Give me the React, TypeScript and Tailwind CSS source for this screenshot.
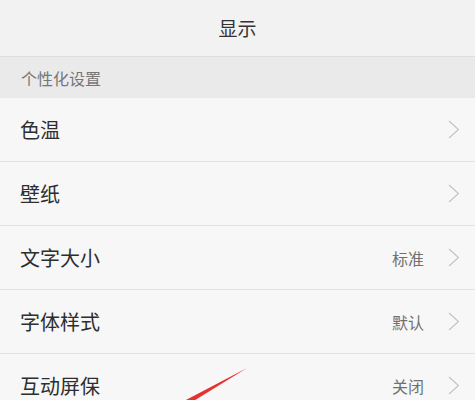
import React from "react";

type Row = { label: string; value?: string };

const ROWS: Row[] = [
  { label: "色温" },
  { label: "壁纸" },
  { label: "文字大小", value: "标准" },
  { label: "字体样式", value: "默认" },
  { label: "互动屏保", value: "关闭" },
];

function Chevron() {
  return (
    <svg width="12" height="19" viewBox="0 0 12 19" fill="none" className="shrink-0">
      <path d="M1 1 L10.5 9.5 L1 18" stroke="#c4c4c4" strokeWidth="1.2" />
    </svg>
  );
}

export default function App() {
  return (
    <div
      className="relative h-[400px] w-[475px] overflow-hidden bg-[#f7f7f7]"
      style={{ fontFamily: '"Noto Sans CJK SC", "Noto Sans", sans-serif' }}
    >
      <header className="flex h-[57px] items-center justify-center border-b border-[#dedede] bg-[#f2f2f2] pt-[1px]">
        <h1 className="text-[19px] text-[#333]">显示</h1>
      </header>

      <div className="flex h-[41px] items-center bg-[#eaeaea] px-[21px]">
        <span className="text-[16px] text-[#767676]">个性化设置</span>
      </div>

      {ROWS.map((row) => (
        <div
          key={row.label}
          className="flex h-[64px] items-center border-b border-[#e3e3e3] pl-[20px] pr-[15px]"
        >
          <span className="flex-1 text-[20px] text-[#2e2e2e]">{row.label}</span>
          {row.value ? <span className="mr-[24px] text-[16px] text-[#707070]">{row.value}</span> : null}
          <Chevron />
        </div>
      ))}

      {/* annotation stroke */}
      <svg className="pointer-events-none absolute left-0 top-0" width="475" height="400">
        <polygon points="247,368 192,402 184,401" fill="#e8312f" />
      </svg>
    </div>
  );
}
